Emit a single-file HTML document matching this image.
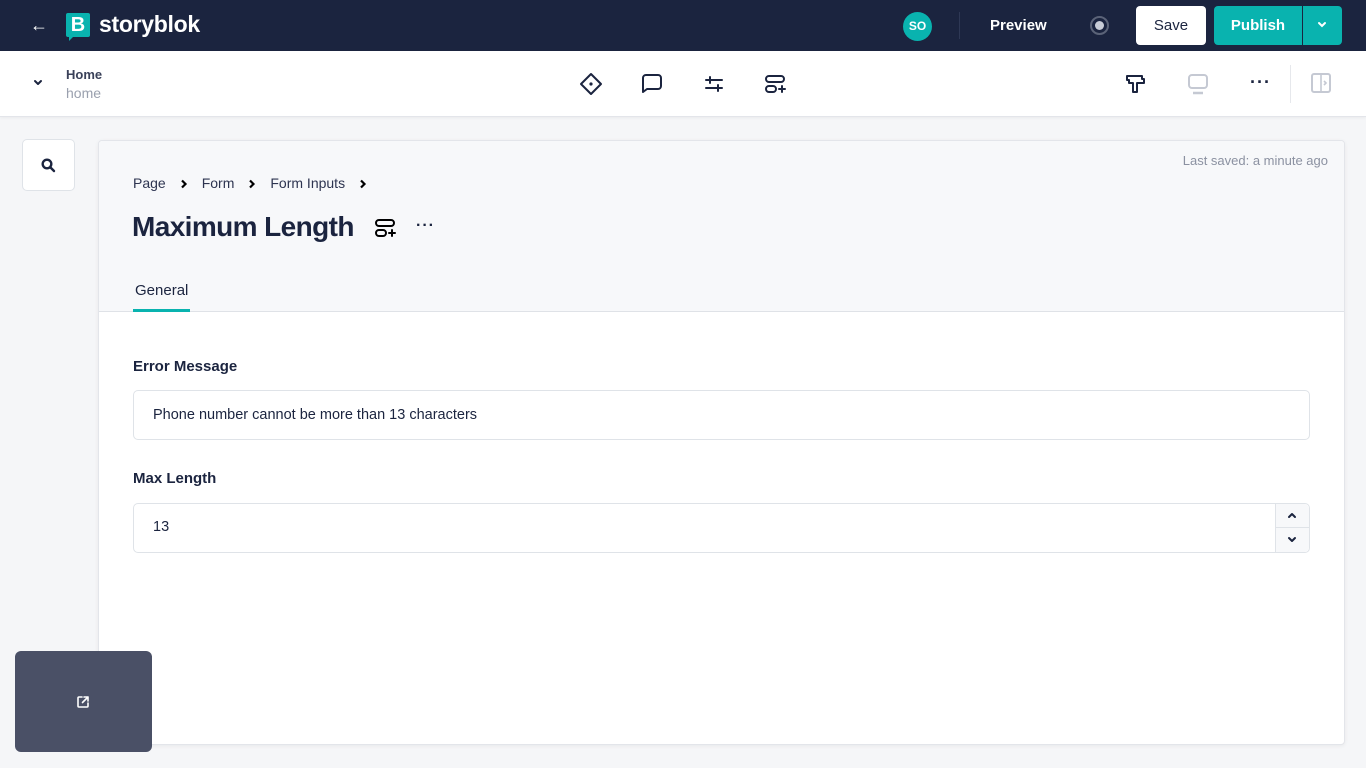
<!DOCTYPE html>
<html><head><meta charset="utf-8"><style>
*{box-sizing:border-box;margin:0;padding:0}
body{width:1366px;height:768px;overflow:hidden;background:#f5f6f8;font-family:"Liberation Sans",Arial,sans-serif;color:#1b243f;position:relative}
.a{position:absolute}
.top{left:0;top:0;width:1366px;height:51px;background:#1b243f}
.sub{left:0;top:51px;width:1366px;height:66px;background:#fff;border-bottom:1px solid #e3e5ea;box-shadow:0 1px 3px rgba(0,0,0,.05)}
.ic{stroke:#1b243f;fill:none;stroke-width:2;stroke-linecap:round;stroke-linejoin:round}
.panel{left:98px;top:140px;width:1247px;height:605px;background:#fff;border:1px solid #e3e5ea;border-radius:4px;box-shadow:0 1px 4px rgba(0,0,0,.06);overflow:hidden}
.inp{left:34px;width:1177px;height:50px;border:1px solid #dfe3e8;border-radius:5px;background:#fff;font-size:15px;padding:16px 19px;color:#1b243f}
.lbl{left:34px;font-size:15px;font-weight:bold;color:#1b243f}
.chev{display:inline-block;margin:0 14px;vertical-align:middle}
</style></head><body>
<div class="a top"></div>
<div class="a" style="left:30px;top:15px;color:#fff;font-size:18px;font-weight:bold">&#8592;</div>
<div class="a" style="left:66px;top:13px;width:24px;height:24px;background:#09b3af;border-radius:2px;color:#fff;font-weight:bold;font-size:20px;text-align:center;line-height:24px">B</div>
<div class="a" style="left:69px;top:36px;width:0;height:0;border-left:5px solid #09b3af;border-bottom:5px solid transparent"></div>
<div class="a" style="left:99px;top:11px;color:#fff;font-size:23px;font-weight:bold;letter-spacing:-.3px">storyblok</div>
<div class="a" style="left:903px;top:12px;width:29px;height:29px;border-radius:50%;background:#09b3af;color:#fff;font-size:12px;font-weight:bold;text-align:center;line-height:29px">SO</div>
<div class="a" style="left:959px;top:12px;width:1px;height:27px;background:#2e3855"></div>
<div class="a" style="left:990px;top:17px;color:#fff;font-size:15px;font-weight:bold">Preview</div>
<div class="a" style="left:1090px;top:16px;width:19px;height:19px;border-radius:50%;border:2px solid #5b6378"></div>
<div class="a" style="left:1095px;top:21px;width:9px;height:9px;border-radius:50%;background:#c8ccd6"></div>
<div class="a" style="left:1136px;top:6px;width:70px;height:39px;background:#fff;border-radius:4px;font-size:15px;text-align:center;line-height:39px;color:#1b243f">Save</div>
<div class="a" style="left:1214px;top:6px;width:128px;height:39px;background:#09b3af;border-radius:4px"></div>
<div class="a" style="left:1214px;top:6px;width:88px;height:39px;color:#fff;font-size:15px;font-weight:bold;text-align:center;line-height:39px">Publish</div>
<div class="a" style="left:1302px;top:6px;width:1px;height:39px;background:#1b243f"></div>
<svg class="a" style="left:1316px;top:20px" width="12" height="10"><path d="M3 3l3 3 3-3" stroke="#fff" stroke-width="2" fill="none" stroke-linecap="round"/></svg>

<div class="a sub"></div>
<svg class="a" style="left:32px;top:78px" width="12" height="10"><path d="M3 3l3 3 3-3" class="ic"/></svg>
<div class="a" style="left:66px;top:67px;font-size:13px;font-weight:bold;color:#3a4159">Home</div>
<div class="a" style="left:66px;top:85px;font-size:14px;color:#9aa0ae">home</div>
<svg class="a" style="left:578px;top:71px" width="26" height="26"><path d="M13 3l10 10-10 10-10-10z" class="ic"/><circle cx="13" cy="13" r="1.6" fill="#1b243f"/></svg>
<svg class="a" style="left:640px;top:72px" width="24" height="24"><path d="M3 20V6a3 3 0 0 1 3-3h12a3 3 0 0 1 3 3v8a3 3 0 0 1-3 3H7z" class="ic"/></svg>
<svg class="a" style="left:702px;top:72px" width="24" height="24"><path d="M4 8h16M8 5v6M4 16h16M16 13v6" class="ic"/></svg>
<svg class="a" style="left:763px;top:72px" width="26" height="24"><rect x="3" y="4" width="18" height="6" rx="3" class="ic"/><rect x="3" y="14" width="10" height="6" rx="3" class="ic"/><path d="M19 14v6M16 17h6" class="ic"/></svg>
<svg class="a" style="left:1124px;top:72px" width="24" height="24"><path d="M3 4h15v3h2v4h-7v9h-4v-9H5V8H3z" class="ic"/></svg>
<svg class="a" style="left:1186px;top:72px" width="24" height="24"><rect x="3" y="3" width="18" height="13" rx="3" stroke="#c5c9d3" stroke-width="2" fill="none"/><path d="M7 21h10" stroke="#c5c9d3" stroke-width="2.5"/></svg>
<div class="a" style="left:1250px;top:72px;font-size:18px;font-weight:bold;letter-spacing:1px">&middot;&middot;&middot;</div>
<div class="a" style="left:1290px;top:65px;width:1px;height:38px;background:#e6e8ec"></div>
<svg class="a" style="left:1309px;top:71px" width="26" height="26"><rect x="3" y="3" width="18" height="18" rx="2" stroke="#c5c9d3" stroke-width="2" fill="none"/><path d="M12 3v18M15 10l2 2-2 2" stroke="#c5c9d3" stroke-width="1.6" fill="none"/></svg>

<div class="a" style="left:22px;top:139px;width:53px;height:52px;background:#fff;border:1px solid #dfe3e8;border-radius:5px"></div>
<svg class="a" style="left:40px;top:157px" width="18" height="18"><circle cx="7" cy="7" r="4.3" stroke="#1b243f" stroke-width="2.4" fill="none"/><path d="M10.5 10.5l3.5 3.5" stroke="#1b243f" stroke-width="2.4" stroke-linecap="round"/></svg>

<div class="a panel">
 <div class="a" style="left:0;top:0;width:1247px;height:171px;background:#f7f8fa;border-bottom:1px solid #dfe2e7"></div>
 <div class="a" style="right:16px;top:12px;font-size:13px;color:#8b91a1">Last saved: a minute ago</div>
 <div class="a" style="left:34px;top:34px;font-size:14px;color:#2d3450">Page<svg class="chev" width="8" height="10"><path d="M2 1.5l3.5 3.5-3.5 3.5" stroke="#000" stroke-width="2.2" fill="none"/></svg>Form<svg class="chev" width="8" height="10"><path d="M2 1.5l3.5 3.5-3.5 3.5" stroke="#000" stroke-width="2.2" fill="none"/></svg>Form Inputs<svg class="chev" width="8" height="10"><path d="M2 1.5l3.5 3.5-3.5 3.5" stroke="#000" stroke-width="2.2" fill="none"/></svg></div>
 <div class="a" style="left:33px;top:70px;font-size:28px;font-weight:bold;letter-spacing:-.6px">Maximum Length</div>
 <svg class="a" style="left:274px;top:75px" width="26" height="24"><rect x="3" y="4" width="18" height="6" rx="3" class="ic" style="stroke:#000"/><rect x="3" y="14" width="10" height="6" rx="3" class="ic" style="stroke:#000"/><path d="M19 14v6M16 17h6" class="ic" style="stroke:#000"/></svg>
 <div class="a" style="left:317px;top:76px;font-size:16px;font-weight:bold;letter-spacing:1px">&middot;&middot;&middot;</div>
 <div class="a" style="left:36px;top:141px;font-size:15px;color:#1b243f">General</div>
 <div class="a" style="left:34px;top:168px;width:57px;height:3px;background:#09b3af"></div>
 <div class="a lbl" style="top:217px">Error Message</div>
 <div class="a inp" style="top:249px;font-size:14.5px">Phone number cannot be more than 13 characters</div>
 <div class="a lbl" style="top:329px">Max Length</div>
 <div class="a inp" style="top:362px;height:50px;font-size:14.5px;padding-top:15px">13</div>
 <div class="a" style="left:1176px;top:363px;width:34px;height:48px;border-left:1px solid #dfe3e8;background:#f7f8fa;border-radius:0 5px 5px 0"></div>
 <div class="a" style="left:1177px;top:386px;width:33px;height:1px;background:#dfe3e8"></div>
 <svg class="a" style="left:1187px;top:370px" width="12" height="10"><path d="M3 6l3-3 3 3" class="ic" stroke-width="2.2"/></svg>
 <svg class="a" style="left:1187px;top:394px" width="12" height="10"><path d="M3 3l3 3 3-3" class="ic" stroke-width="2.2"/></svg>
</div>

<div class="a" style="left:15px;top:651px;width:137px;height:101px;background:#4a5066;border-radius:6px"></div>
<svg class="a" style="left:75px;top:694px" width="16" height="16"><path d="M7 3H4a1 1 0 0 0-1 1v8a1 1 0 0 0 1 1h8a1 1 0 0 0 1-1V9M9 3h4v4M13 3L7.5 8.5" stroke="#fff" stroke-width="1.6" fill="none" stroke-linecap="round" stroke-linejoin="round"/></svg>
</body></html>
